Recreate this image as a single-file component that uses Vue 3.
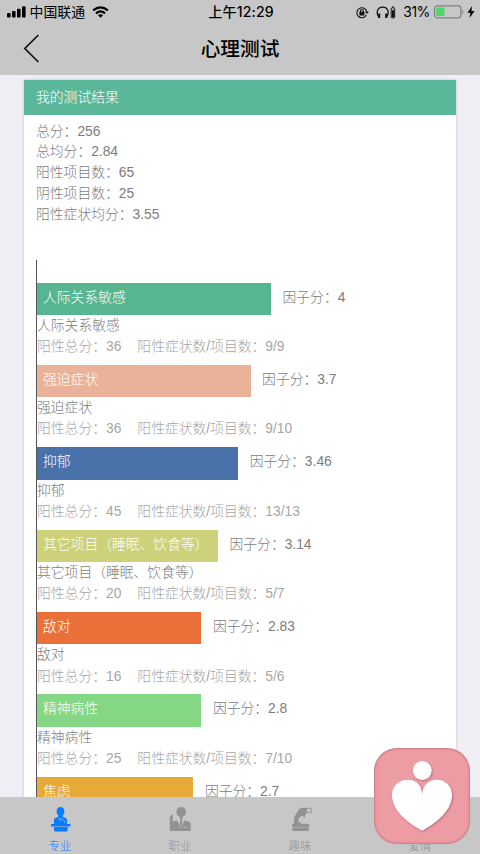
<script setup>
const summary = [
  ['总分', '256'],
  ['总均分', '2.84'],
  ['阳性项目数', '65'],
  ['阴性项目数', '25'],
  ['阳性症状均分', '3.55'],
]

const factors = [
  { name: '人际关系敏感', score: '4', total: 36, ratio: '9/9', color: '#57b591', width: 234 },
  { name: '强迫症状', score: '3.7', total: 36, ratio: '9/10', color: '#eab298', width: 213.6 },
  { name: '抑郁', score: '3.46', total: 45, ratio: '13/13', color: '#4971aa', width: 201.2 },
  { name: '其它项目（睡眠、饮食等）', score: '3.14', total: 20, ratio: '5/7', color: '#cdd17a', width: 181 },
  { name: '敌对', score: '2.83', total: 16, ratio: '5/6', color: '#e97039', width: 164.4 },
  { name: '精神病性', score: '2.8', total: 25, ratio: '7/10', color: '#84d784', width: 164.4 },
  { name: '焦虑', score: '2.7', color: '#e7a938', width: 156.4 },
]
</script>

<template>
  <div class="screen">
    <header class="top">
      <div class="status">
        <div class="carrier">
          <svg class="signal" width="19" height="12" viewBox="0 0 19 12">
            <rect x="0" y="7" width="3.6" height="4.5" rx="1" />
            <rect x="5" y="5" width="3.6" height="6.5" rx="1" />
            <rect x="10" y="2.7" width="3.6" height="8.8" rx="1" />
            <rect x="15" y="0.3" width="3.6" height="11.2" rx="1" />
          </svg>
          <span class="operator">中国联通</span>
          <svg class="wifi" width="17" height="12" viewBox="0 0 17 12" fill="none" stroke="#000" stroke-width="2.2">
            <path d="M1.1 4.4Q8.5-1.8 15.9 4.4" />
            <path d="M4 7.4Q8.5 3.5 13 7.4" />
            <path d="M8.5 11.7L6 9.2Q8.5 7.3 11 9.2Z" fill="#000" stroke="none" />
          </svg>
        </div>
        <span class="time">上午12:29</span>
        <div class="indicators">
          <svg class="lock" width="13" height="13" viewBox="0 0 13 13" fill="none" stroke="#111" stroke-width="1.1">
            <path d="M10.3 9.1A5 5 0 1 1 10.6 5.2" />
            <path d="M8.9 5.5H12.9L10.9 8.1Z" fill="#111" stroke="none" />
            <rect x="3.4" y="5.7" width="5" height="3.7" rx=".5" fill="#111" stroke="none" />
            <path d="M4.5 6V4.9a1.4 1.4 0 0 1 2.8 0V6" />
          </svg>
          <svg class="headset" width="20" height="13" viewBox="0 0 20 13" fill="none" stroke="#111" stroke-width="1.3">
            <path d="M3.2 11.5C-.5 7 1.2 1.2 6.7 1.2S13.9 7 10.2 11.5" />
            <path d="M3.2 7.5V12M10.2 7.5V12" stroke-width="2" />
            <rect x="15.2" y="1.9" width="3.5" height="10" rx=".8" stroke-width="1" />
            <path d="M16 1H18" stroke-width="1" />
            <rect x="16" y="4.2" width="2" height="7" fill="#111" stroke="none" />
          </svg>
          <span class="percent">31%</span>
          <svg class="battery" width="31" height="14" viewBox="0 0 31 14">
            <rect x=".6" y=".8" width="26.3" height="12" rx="2.6" fill="none" stroke="#808080" stroke-width="1.2" />
            <rect x="2.3" y="2.5" width="8" height="8.6" rx=".8" fill="#4cd964" />
            <path d="M28.3 4.7Q30.5 6.8 28.3 8.9Z" fill="#808080" />
          </svg>
          <svg class="bolt" width="8" height="12" viewBox="0 0 8 12">
            <path d="M5.1 0L.4 6.7H3.4L2.5 12 7.6 4.9H4.4Z" />
          </svg>
        </div>
      </div>
      <div class="nav">
        <svg class="back" width="17" height="29" viewBox="0 0 17 29" fill="none" stroke="#111" stroke-width="1.7">
          <path d="M15.4 1L1.8 14.5L15.4 28" />
        </svg>
        <h1>心理测试</h1>
      </div>
    </header>

    <main class="content">
      <section class="card">
        <h2>我的测试结果</h2>
        <div class="summary">
          <p v-for="[label, value] in summary" :key="label">{{ label }}：{{ value }}</p>
        </div>
        <div class="chart">
          <article v-for="f in factors" :key="f.name" class="factor">
            <div class="bar-row">
              <div class="bar" :style="{ width: f.width + 'px', background: f.color }">{{ f.name }}</div>
              <span class="score">因子分：{{ f.score }}</span>
            </div>
            <template v-if="f.ratio">
              <p class="name">{{ f.name }}</p>
              <p class="detail"><span>阳性总分：{{ f.total }}</span><span>阳性症状数/项目数：{{ f.ratio }}</span></p>
            </template>
          </article>
        </div>
      </section>
    </main>

    <footer class="tabs">
      <div class="tab active">
        <svg width="24" height="26" viewBox="0 0 24 26" fill="currentColor">
          <ellipse cx="12.5" cy="4.6" rx="3.9" ry="4.6" />
          <path d="M6 17V13Q6 10.8 10 10V8.5H15V10Q19 10.8 19 13V17Z" />
          <path d="M10.5 10.5L12.5 13.5 14.5 10.5M15 12.5l2.5 3.5" fill="none" stroke="#c7c7c7" stroke-width=".7" />
          <rect x="3" y="17" width="19.5" height="2.6" rx=".6" />
          <path d="M6 20H19.7V23Q19.7 24.5 18.2 24.5H7.5Q6 24.5 6 23Z" />
        </svg>
        <span>专业</span>
      </div>
      <div class="tab">
        <svg width="24" height="26" viewBox="0 0 24 26" fill="currentColor">
          <ellipse cx="13.2" cy="5" rx="4.8" ry="5" />
          <path d="M1.8 24V11Q1.8 9 3 8.5V7.5Q4.7 7 4.7 9V14.5L9.2 13.2 13 21.5 16.3 13.5 21 14.8Q22.7 15.5 22.7 17.5V24Z" />
          <path d="M11.3 9H15L14 12.5 14.4 17.5 13.1 20.5 11.8 17.5 12.3 12.5Z" />
          <path d="M16 20.3H20" stroke="#c7c7c7" stroke-width=".6" />
        </svg>
        <span>职业</span>
      </div>
      <div class="tab">
        <svg width="24" height="26" viewBox="0 0 24 26" fill="currentColor">
          <path d="M18.5 1.3H23.2V5.7H18.5Z" fill="none" stroke="currentColor" stroke-width=".9" />
          <path d="M10.8 2.5Q12 .8 14.5 .8H19V5.6L17 8.3V10.5H15.4V8.6L12.8 9.4 10.6 11.6V15.3H12.7V17.2H6V13.5Q6 9 8.3 6.5Z" />
          <rect x="4" y="16.8" width="17.2" height="3.2" rx=".5" />
          <path d="M4.5 19.5H20.7V24H4.5Z" />
          <path d="M4.5 20.3H20.7" stroke="#c7c7c7" stroke-width=".4" />
        </svg>
        <span>趣味</span>
      </div>
      <div class="tab">
        <svg width="24" height="26" viewBox="0 0 24 26" fill="currentColor">
          <path d="M12 22L3 12C0 6 8 2 12 8C16 2 24 6 21 12Z" />
        </svg>
        <span>爱情</span>
      </div>
    </footer>

    <div class="badge">
      <svg width="96" height="96" viewBox="0 0 96 96" fill="#fff">
        <circle cx="48.3" cy="22.5" r="9.4" />
        <path d="M48.2 46.5C47.8 37.5 42.5 31.8 34 31.8C25 31.8 18 38 18 46.8C18 62 32 74 48.2 82.7C64 74 78 62 78 46.8C78 38 71.5 31.8 62.8 31.8C54.5 31.8 48.7 37.5 48.2 46.5Z" />
      </svg>
    </div>
  </div>
</template>

<style>
body {
  margin: 0;
}
</style>

<style scoped>
.screen {
  position: relative;
  display: flex;
  flex-direction: column;
  width: 480px;
  height: 854px;
  overflow: hidden;
  background: #f0eff5;
  color: #7c7c7c;
  font-family: "Liberation Sans", "Noto Sans CJK SC", sans-serif;
  font-size: 13.8px;
  font-weight: 300;
}
h1, h2, p {
  margin: 0;
}
.top {
  flex: none;
  height: 75px;
  background: #c7c7c7;
  color: #000;
}
.status {
  display: grid;
  grid-template-columns: 1fr auto 1fr;
  align-items: center;
  height: 24px;
  padding: 0 5px 0 7px;
}
.carrier, .indicators {
  display: flex;
  align-items: center;
}
.operator {
  margin-left: 3.5px;
  font-size: 13.9px;
  font-weight: 400;
  line-height: 24px;
}
.wifi {
  margin-left: 7px;
}
.time {
  font-family: Inter, "Noto Sans CJK SC", sans-serif;
  font-size: 14.1px;
  font-weight: 500;
  line-height: 24px;
  letter-spacing: 0.15px;
}
.indicators {
  justify-content: flex-end;
}
.headset {
  margin-left: 7px;
}
.percent {
  margin: 0 4px 0 7px;
  font-family: Inter, sans-serif;
  font-size: 13.8px;
  font-weight: 400;
  letter-spacing: -0.3px;
}
.bolt {
  margin-left: 2px;
}
.nav {
  display: grid;
  grid-template-columns: 1fr auto 1fr;
  align-items: center;
  height: 49px;
  padding: 0 23px;
}
h1 {
  padding-top: 2px;
  font-size: 19.7px;
  font-weight: 500;
  line-height: 47px;
}
.content {
  flex: 1;
  min-height: 0;
  overflow: hidden;
  padding: 5px 24px 0;
}
.card {
  background: #fff;
  box-shadow: 0 0 3px rgba(0, 0, 0, 0.2);
}
h2 {
  height: 34.5px;
  padding-left: 12px;
  background: #5bb799;
  color: #fff;
  font-size: 13.8px;
  font-weight: 300;
  line-height: 36px;
}
.summary {
  padding: 7px 12px 0;
}
.summary p {
  height: 20.9px;
  line-height: 20.9px;
}
.chart {
  margin: 33.8px 12px 0;
  padding-top: 23px;
  border-left: 1px solid #555;
}
.factor {
  height: 82.35px;
}
.bar-row {
  display: flex;
  height: 32.3px;
  line-height: 29.6px;
}
.bar {
  box-sizing: border-box;
  padding-left: 6px;
  color: #fff;
  white-space: nowrap;
}
.score {
  margin-left: 11.5px;
}
.name, .detail {
  height: 21.1px;
  line-height: 21.8px;
}
.detail {
  display: flex;
  gap: 16px;
  color: #a6a6a6;
}
.tabs {
  display: flex;
  flex: none;
  height: 57.5px;
  background: #c7c7c7;
  color: #929292;
}
.tab {
  display: flex;
  flex: 1;
  flex-direction: column;
  align-items: center;
  padding-top: 10px;
  font-size: 11.4px;
  line-height: 16px;
}
.tab span {
  margin-top: 5px;
}
.active {
  color: #087bff;
}
.badge {
  position: absolute;
  right: 10px;
  bottom: 10px;
  width: 96px;
  height: 96px;
  border-radius: 23px;
  background: #ee9ca3;
  box-shadow: inset 0 0 2px 1px rgba(160, 90, 95, 0.5);
}
.badge svg {
  display: block;
  filter: drop-shadow(1px 1px 1px rgba(130, 65, 75, 0.45));
}
</style>
